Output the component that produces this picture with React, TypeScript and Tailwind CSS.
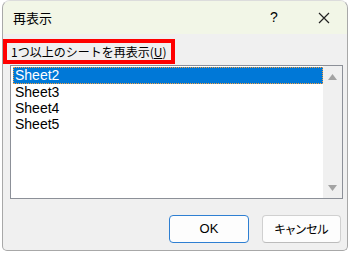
import React from "react";

const sheets = ["Sheet2", "Sheet3", "Sheet4", "Sheet5"];

function TitleBar() {
  return (
    <div className="h-[33px] bg-[#f2f6e7] flex items-center shrink-0">
      <span className="pl-[10px] text-[13px] text-black font-['Noto_Sans_CJK_JP',sans-serif]">
        再表示
      </span>
      <div className="ml-auto w-[46px] mr-[4px] flex justify-center text-[14px] font-['Liberation_Sans',sans-serif] text-black">
        ?
      </div>
      <div className="w-[46px] flex justify-center">
        <svg width="12" height="12" viewBox="0 0 12 12">
          <path d="M1 1 L11 11 M11 1 L1 11" stroke="#222" strokeWidth="1.2" />
        </svg>
      </div>
    </div>
  );
}

function ListBox() {
  return (
    <div className="ml-[7px] mt-[1px] w-[333px] h-[134px] border border-[#8c9098] bg-white flex">
      <div className="flex-1 pt-[1px] pl-[2px]">
        {sheets.map((name, i) => (
          <div
            key={name}
            className={
              i === 0
                ? "h-[17px] leading-[15px] pl-[1px] bg-[#0078d7] text-white border border-dotted border-[#f5a040] text-[14px] font-['Liberation_Sans',sans-serif]"
                : "h-[16px] leading-[16px] pl-[2px] text-black text-[14px] font-['Liberation_Sans',sans-serif]"
            }
          >
            {name}
          </div>
        ))}
      </div>
      <div className="w-[19px] bg-[#f0f0f0] flex flex-col items-center justify-between pt-[8px] pb-[7px]">
        <svg width="9" height="6" viewBox="0 0 9 6">
          <path d="M4.5 0 L9 6 L0 6 Z" fill="#a3a3a3" />
        </svg>
        <svg width="9" height="6" viewBox="0 0 9 6">
          <path d="M0 0 L9 0 L4.5 6 Z" fill="#a3a3a3" />
        </svg>
      </div>
    </div>
  );
}

export default function App() {
  return (
    <div className="w-[350px] h-[253px] bg-white px-[2px] pb-[2px]">
      <div className="h-[251px] rounded-t-[8px] rounded-b-[5px] border border-[#a8a8a8] border-t-[#dcdcdc] overflow-hidden flex flex-col bg-[#f0f0f0]">
        <TitleBar />
        <div className="flex-1 pt-[5px]">
          <div className="w-[172px] h-[25px] border-[4px] border-[#ff0000] flex items-center pl-[4px]">
            <span className="text-[12px] text-black font-['Noto_Sans_CJK_JP',sans-serif] whitespace-nowrap">
              1つ以上のシートを再表示(<span className="underline">U</span>)
            </span>
          </div>
          <ListBox />
          <div className="mt-[16px] flex justify-end gap-[13px] mr-[6px]">
            <button className="w-[80px] h-[28px] rounded-[4px] bg-[#fdfdfd] border-[1.5px] border-[#2e7fd2] text-[13px] text-black font-['Liberation_Sans',sans-serif]">
              OK
            </button>
            <button className="w-[79px] h-[28px] rounded-[4px] bg-[#fdfdfd] border border-[#d0d0d0] border-b-[#bcbcbc] text-[12px] text-black font-['Noto_Sans_CJK_JP',sans-serif] [font-feature-settings:'palt']">
              キャンセル
            </button>
          </div>
        </div>
      </div>
    </div>
  );
}
